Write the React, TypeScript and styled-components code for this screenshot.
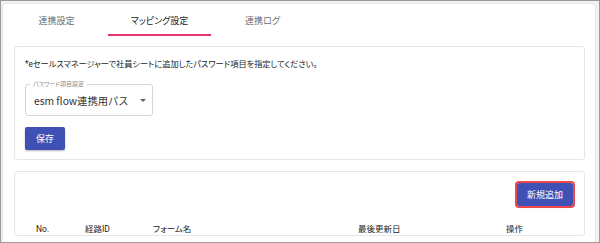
import React from "react";
import styled, { createGlobalStyle } from "styled-components";

const GlobalStyle = createGlobalStyle`
  body {
    margin: 0;
    font-family: Roboto, "Noto Sans CJK JP", "Noto Sans", sans-serif;
    font-feature-settings: "palt";
    color: #333;
  }
`;

const Frame = styled.div`
  width: 600px;
  height: 243px;
  box-sizing: border-box;
  border: 1px solid #9a9a9a;
  background: #f3f3f3;
  padding: 3px 4px 0 2px;
  overflow: hidden;
`;

const Paper = styled.div`
  height: 100%;
  background: #fff;
  border-radius: 3px 3px 0 0;
  box-shadow: 0 0 2px rgba(0, 0, 0, 0.18);
  display: flex;
  flex-direction: column;
`;

const TabBar = styled.div`
  display: flex;
  padding-left: 2px;
  height: 32px;
  flex-shrink: 0;
`;

const Tab = styled.div<{ $active?: boolean }>`
  width: 103px;
  display: flex;
  align-items: center;
  justify-content: center;
  font-size: 9px;
  color: ${({ $active }) => ($active ? "#222" : "#6f6f6f")};
  border-bottom: 2px solid ${({ $active }) => ($active ? "#e8336b" : "transparent")};
  padding-top: 2px;
`;

const Content = styled.div`
  padding: 10px 10px 0 11px;
  display: flex;
  flex-direction: column;
  gap: 11px;
`;

const Card = styled.div`
  border: 1px solid #e6e6e6;
  border-radius: 3px;
  padding: 12px 10px 9px 10px;
  display: flex;
  flex-direction: column;
  align-items: flex-start;
`;

const Note = styled.div`
  font-size: 8.2px;
  line-height: 11px;
  color: #222;
`;

const Field = styled.div`
  position: relative;
  margin-top: 14px;
  width: 128px;
  height: 32px;
  box-sizing: border-box;
  border: 1px solid #d5d5d5;
  border-radius: 3px;
  display: flex;
  align-items: center;
  padding: 0 6px 0 8px;
  justify-content: space-between;
`;

const Legend = styled.span`
  position: absolute;
  top: -5px;
  left: 4px;
  padding: 0 3px;
  background: #fff;
  font-size: 6px;
  line-height: 8px;
  color: #8a8a8a;
`;

const Value = styled.span`
  font-family: "Noto Sans CJK JP", "Noto Sans", sans-serif;
  font-size: 10.3px;
  font-feature-settings: normal;
  color: #333;
  padding-top: 1px;
`;

const Caret = styled.span`
  width: 0;
  height: 0;
  border-left: 3px solid transparent;
  border-right: 3px solid transparent;
  border-top: 3px solid #666;
  margin-top: 1px;
`;

const Button = styled.button<{ $marked?: boolean }>`
  font-family: inherit;
  font-feature-settings: "palt";
  font-size: 9px;
  color: #fff;
  background: #3f51b5;
  border: none;
  border-radius: 2px;
  box-shadow: 0 1px 2px rgba(0, 0, 0, 0.3);
  height: 23px;
  padding: 0 ${({ $marked }) => ($marked ? "10px" : "11px")};
  outline: ${({ $marked }) => ($marked ? "2px solid #f0484a" : "none")};
  outline-offset: 0;
`;

const SaveRow = styled.div`
  margin-top: 11px;
`;

const ListCard = styled(Card)`
  padding: 11px 10px 0 10px;
  align-items: stretch;
`;

const Toolbar = styled.div`
  display: flex;
  justify-content: flex-end;
  padding-right: 1px;
`;

const HeaderRow = styled.div`
  display: grid;
  grid-template-columns: 49px 68px 205px 148px auto;
  align-items: baseline;
  padding: 17px 0 0 11px;
  font-size: 8.5px;
  line-height: 12px;
  color: #222;
`;

const App: React.FC = () => {
  return (
    <Frame>
      <GlobalStyle />
      <Paper>
        <TabBar>
          <Tab>連携設定</Tab>
          <Tab $active>マッピング設定</Tab>
          <Tab>連携ログ</Tab>
        </TabBar>
        <Content>
          <Card>
            <Note>*eセールスマネージャーで社員シートに追加したパスワード項目を指定してください。</Note>
            <Field>
              <Legend>パスワード項目設定</Legend>
              <Value>esm flow連携用パス</Value>
              <Caret />
            </Field>
            <SaveRow>
              <Button>保存</Button>
            </SaveRow>
          </Card>
          <ListCard>
            <Toolbar>
              <Button $marked>新規追加</Button>
            </Toolbar>
            <HeaderRow>
              <span>No.</span>
              <span>経路ID</span>
              <span>フォーム名</span>
              <span>最後更新日</span>
              <span>操作</span>
            </HeaderRow>
          </ListCard>
        </Content>
      </Paper>
    </Frame>
  );
};

export default App;
